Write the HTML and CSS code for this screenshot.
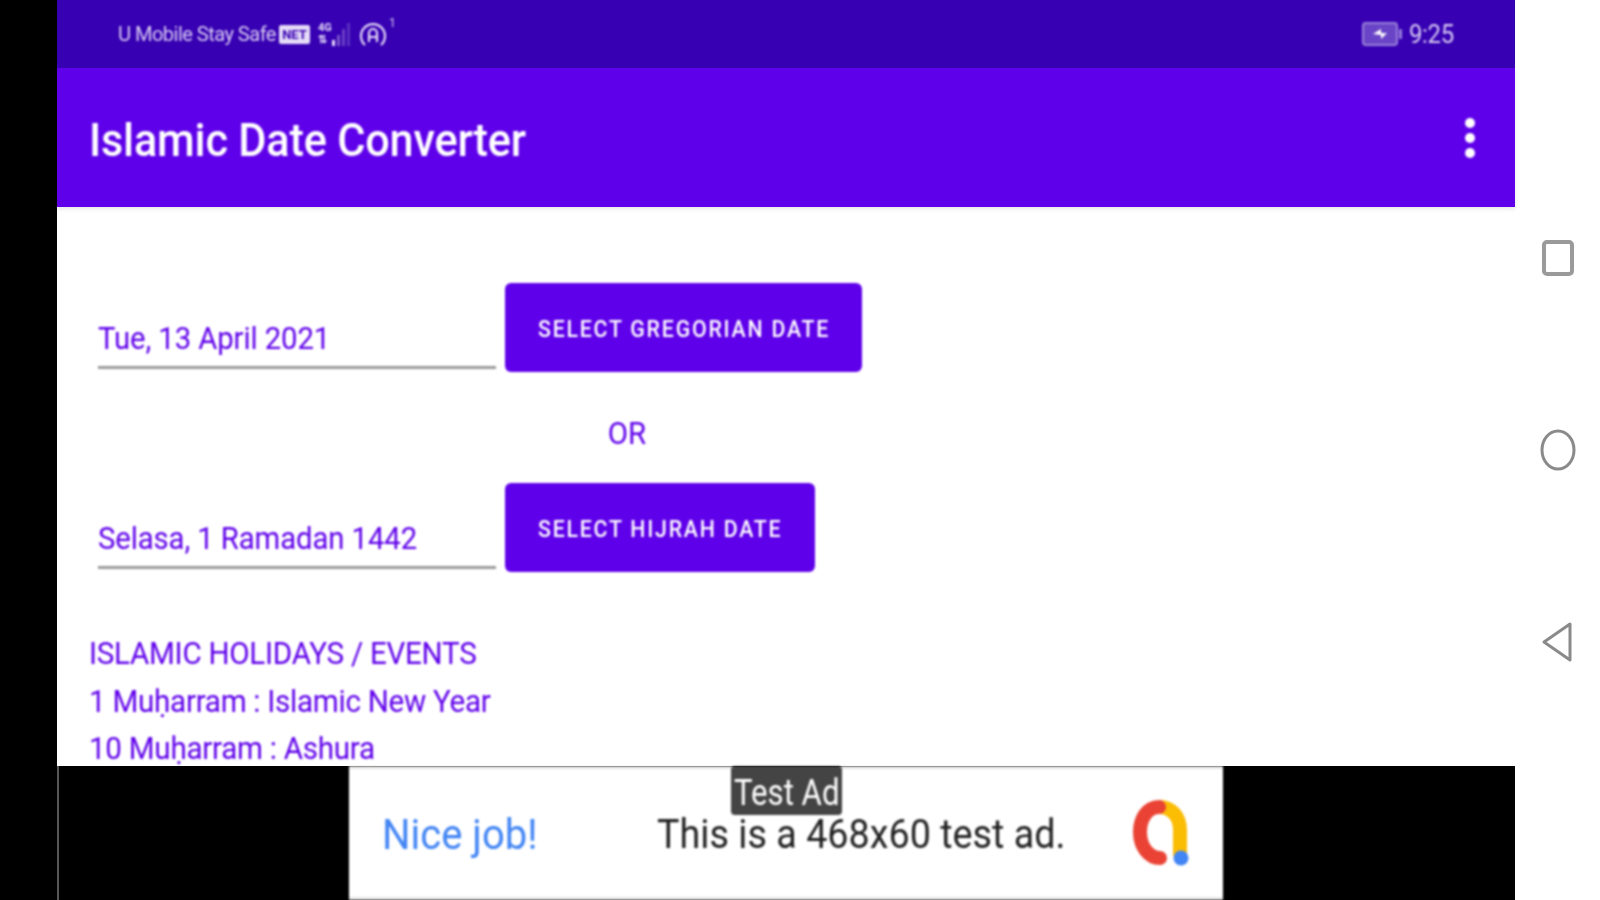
FILE: index.html
```html
<!DOCTYPE html>
<html lang="en">
<head>
  <meta charset="UTF-8" />
  <meta name="viewport" content="width=device-width, initial-scale=1.0"/>
  <title>Islamic Date Converter</title>
  <link rel="stylesheet" href="styles.css">
</head>
<body>
  <div class="left-edge"></div>

  <div class="screen">
    <div class="status-bar">
      <div class="status-left">
        <span class="carrier"><span class="squeeze">U Mobile Stay Safe</span></span>
        <span class="net-badge">NET</span>
        <span class="net-type"><span>4G</span><span>&#8645;</span></span>
        <svg class="signal" width="22" height="24" viewBox="0 0 22 24">
          <rect x="0" y="18" width="3" height="6" fill="#e6dcf8"/>
          <rect x="5" y="13" width="3" height="11" fill="#7a55c8"/>
          <rect x="10" y="7" width="3" height="17" fill="#6a42c4"/>
          <rect x="15" y="1" width="3" height="23" fill="#5a30bf"/>
        </svg>
        <svg class="hotspot" width="28" height="28" viewBox="0 0 28 28" fill="none" stroke="#e6dcf8" stroke-width="2.2">
          <path d="M6 25 A12 12 0 1 1 22 25"/>
          <path d="M10 22 V13 A4 4 0 0 1 18 13 V22 M10 17 H18"/>
        </svg>
        <span class="hotspot-count">1</span>
      </div>
      <div class="status-right">
        <svg class="battery" width="42" height="26" viewBox="0 0 42 26">
          <rect x="1" y="2" width="34" height="22" rx="3" fill="#6a44c6" stroke="#9a80da" stroke-width="2"/>
          <rect x="37" y="8" width="3" height="10" rx="1" fill="#9a80da"/>
          <path d="M11 13 L19 8 V12 H25 L19 18 V14 Z" fill="#fff"/>
        </svg>
        <span class="clock">9:25</span>
      </div>
    </div>

    <header class="app-bar">
      <h1 class="app-title"><span class="squeeze">Islamic Date Converter</span></h1>
      <div class="overflow-menu"><i></i><i></i><i></i></div>
    </header>

    <main class="content">
      <div class="date-row">
        <div class="date-field"><span class="squeeze">Tue, 13 April 2021</span></div>
        <button class="button button-gregorian" type="button"><span class="squeeze">SELECT GREGORIAN DATE</span></button>
      </div>
      <div class="or-label"><span class="squeeze">OR</span></div>
      <div class="date-row">
        <div class="date-field"><span class="squeeze">Selasa, 1 Ramadan 1442</span></div>
        <button class="button button-hijrah" type="button"><span class="squeeze">SELECT HIJRAH DATE</span></button>
      </div>
      <div class="events">
        <p><span class="squeeze">ISLAMIC HOLIDAYS / EVENTS</span></p>
        <p><span class="squeeze">1 Muḥarram : Islamic New Year</span></p>
        <p><span class="squeeze">10 Muḥarram : Ashura</span></p>
      </div>
    </main>

    <div class="ad-strip">
      <div class="ad-banner">
        <span class="ad-tag"><span class="squeeze">Test Ad</span></span>
        <span class="ad-headline"><span class="squeeze">Nice job!</span></span>
        <span class="ad-text"><span class="squeeze">This is a 468x60 test ad.</span></span>
        <svg class="ad-logo" width="60" height="70" viewBox="0 0 60 70" fill="none">
          <path d="M28 8 C41 8 49 18 49 31 V57" stroke="#fbbc04" stroke-width="14"/>
          <path d="M28 8 C16 8 9 20 9 33 C9 48 18 59 29 59" stroke="#ea4335" stroke-width="14" stroke-linecap="round"/>
          <circle cx="50" cy="59" r="7.5" fill="#4285f4"/>
        </svg>
      </div>
    </div>
  </div>

  <nav class="nav-bar">
    <svg width="36" height="40" viewBox="0 0 36 40" fill="none" stroke="#9a9a9a" stroke-width="4">
      <rect x="4" y="4" width="28" height="32" rx="3"/>
    </svg>
    <svg width="38" height="44" viewBox="0 0 38 44" fill="none" stroke="#8a8a8a" stroke-width="3">
      <ellipse cx="19" cy="22" rx="16" ry="19"/>
    </svg>
    <svg width="34" height="40" viewBox="0 0 34 40" fill="none" stroke="#8a8a8a" stroke-width="3" stroke-linejoin="round">
      <path d="M29 2 V38 L3 20 Z"/>
    </svg>
  </nav>
</body>
</html>
```

FILE: styles.css
```css
html, body {
  height: 100%;
}
body {
  font-family: 'Roboto', sans-serif;
  margin: 0;
  padding: 0;
  background-color: #fff;
  display: flex;
  overflow: hidden;
}
.left-edge {
  width: 57px;
  background-color: #000;
}
.screen {
  width: 1458px;
  height: 900px;
  display: flex;
  flex-direction: column;
}

/* the capture is a little narrower than it is tall, and soft */
.squeeze {
  display: inline-block;
  transform: scaleX(0.92);
  transform-origin: left center;
  white-space: nowrap;
}
.status-left,
.status-right,
.app-title,
.overflow-menu,
.date-field,
.button,
.or-label,
.events,
.ad-banner {
  filter: blur(0.9px);
}

/* status bar */
.status-bar {
  height: 68px;
  background-color: #3700b3;
  color: #d9ccf3;
  display: flex;
  justify-content: space-between;
  align-items: center;
  padding: 0 61px 0 61px;
  box-sizing: border-box;
}
.status-left,
.status-right {
  display: flex;
  align-items: center;
}
.carrier {
  font-size: 21px;
  letter-spacing: -0.6px;
  width: 161px;
  white-space: nowrap;
}
.carrier .squeeze {
  transform: scaleX(0.96);
}
.net-badge {
  background-color: #e6dcf8;
  color: #3700b3;
  font-size: 13px;
  font-weight: 700;
  border-radius: 2px;
  padding: 2px 3px;
  width: 25px;
  text-align: center;
  margin-right: 8px;
}
.net-type {
  display: flex;
  flex-direction: column;
  font-size: 11px;
  line-height: 12px;
  font-weight: 700;
  color: #e6dcf8;
  width: 14px;
}
.signal {
  margin-right: 5px;
}
.hotspot-count {
  font-size: 12px;
  margin: -22px 0 0 2px;
}
.battery {
  margin-right: 1px;
}
.clock {
  font-size: 26px;
  letter-spacing: -0.3px;
  transform: scaleX(0.92);
  transform-origin: right center;
}

/* app bar */
.app-bar {
  height: 139px;
  background-color: #5f00ea;
  color: #fff;
  display: flex;
  justify-content: space-between;
  align-items: center;
  padding: 0 40px 0 32px;
  box-shadow: 0 2px 4px rgba(0, 0, 0, 0.1);
  position: relative;
}
.app-title {
  margin: 4px 0 0;
  font-size: 46px;
  font-weight: 500;
  letter-spacing: -0.2px;
}
.app-title .squeeze {
  transform: scaleX(0.94);
}
.overflow-menu {
  display: flex;
  flex-direction: column;
  gap: 5px;
}
.overflow-menu i {
  display: block;
  width: 10px;
  height: 10px;
  border-radius: 50%;
  background-color: #fff;
}

/* form */
.content {
  flex: 1;
  min-height: 0;
  overflow: hidden;
  padding: 76px 0 0 32px;
  color: #5f00ea;
}
.date-row {
  display: flex;
  align-items: flex-end;
  height: 89px;
}
.date-field {
  width: 398px;
  margin-left: 9px;
  margin-bottom: 3px;
  padding-bottom: 9px;
  border-bottom: 3px solid #9a9a9a;
  font-size: 32px;
  line-height: 38px;
  letter-spacing: -0.1px;
}
.date-field .squeeze {
  transform: scaleX(0.915);
}
.button {
  height: 89px;
  margin-left: 9px;
  padding: 2px 0 0 33px;
  background-color: #5f00ea;
  color: #fff;
  border: none;
  border-radius: 6px;
  font-family: 'Roboto', sans-serif;
  font-size: 24px;
  font-weight: 500;
  letter-spacing: 2px;
  text-align: left;
}
.button .squeeze {
  transform: scaleX(0.888);
}
.button-gregorian {
  width: 357px;
}
.button-hijrah {
  width: 310px;
}
.or-label {
  width: 1076px;
  height: 111px;
  padding-top: 13px;
  box-sizing: border-box;
  line-height: 97px;
  text-align: center;
  font-size: 32px;
}
.or-label .squeeze {
  transform-origin: center;
}
.events {
  margin-top: 58px;
}
.events p {
  margin: 0;
  font-size: 32px;
  line-height: 47.5px;
  letter-spacing: -0.3px;
}
.events .squeeze {
  transform: scaleX(0.925);
}

/* ad */
.ad-strip {
  height: 134px;
  background-color: #000;
  border-left: 2px solid #555;
  display: flex;
  justify-content: center;
  padding-right: 2px;
  position: relative;
}
.ad-banner {
  width: 874px;
  background-color: #fff;
  border-top: 3px solid #e6e6e6;
  border-bottom: 3px solid #e6e6e6;
  box-sizing: border-box;
  display: flex;
  align-items: center;
  position: relative;
  padding: 2px 0 0 33px;
}
.ad-headline {
  color: #4285f4;
  font-size: 43px;
  width: 275px;
}
.ad-headline .squeeze {
  transform: scaleX(0.93);
}
.ad-text {
  color: #222;
  font-size: 41px;
  width: 474px;
}
.ad-tag {
  position: absolute;
  top: -3px;
  left: 382px;
  width: 105px;
  height: 45px;
  background-color: #444;
  color: #fff;
  font-size: 36px;
  padding: 4px 3px 0;
  line-height: 46px;
  border-radius: 4px;
}
.ad-tag .squeeze {
  transform: scaleX(0.865);
}

/* android nav */
.nav-bar {
  width: 85px;
  height: 900px;
  display: flex;
  flex-direction: column;
  align-items: center;
  padding-top: 238px;
  gap: 150px;
  box-sizing: border-box;
  filter: blur(0.5px);
}
```
